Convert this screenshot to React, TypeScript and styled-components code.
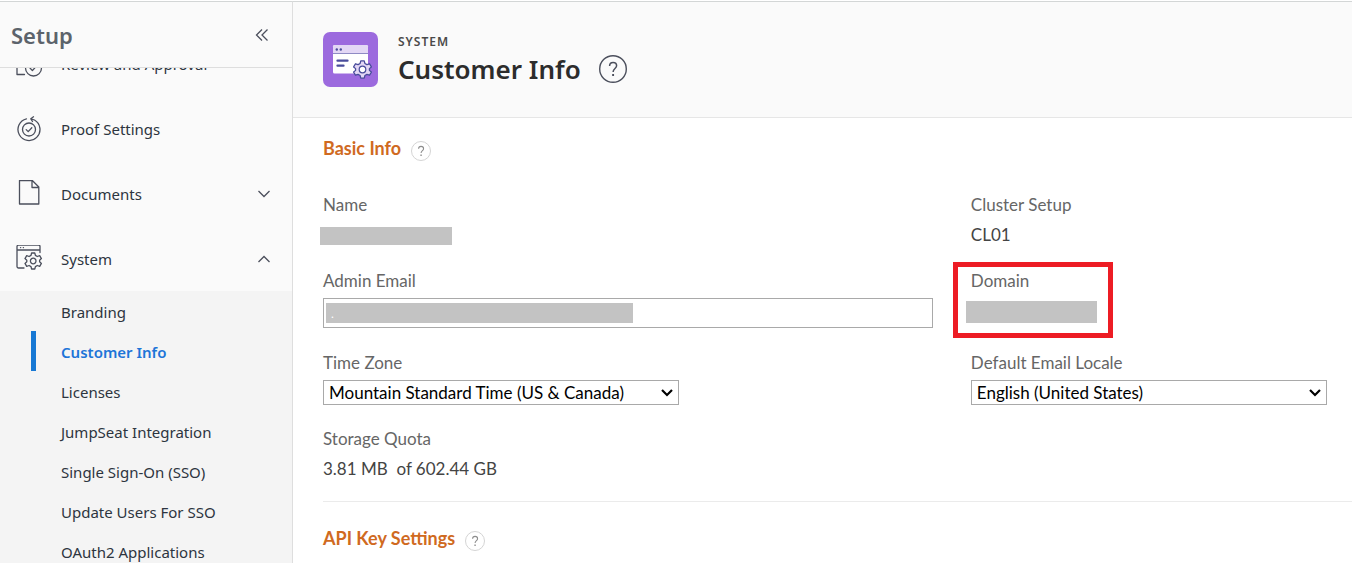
import React from "react";
import styled, { createGlobalStyle, css } from "styled-components";

const navFont = '"Noto Sans", "Open Sans", sans-serif';
const bodyFont = 'Lato, "Open Sans", sans-serif';

const GlobalStyle = createGlobalStyle`
  * { box-sizing: border-box; }
  body { margin: 0; background: #fff; font-family: ${bodyFont}; font-size: 17px; color: #444; }
  h1, h2, p, ul { margin: 0; padding: 0; }
  ul { list-style: none; }
  button { padding: 0; border: 0; background: none; color: inherit; font: inherit; cursor: pointer; }
`;

const Page = styled.div`
  display: flex;
  height: 100vh;
  padding-top: 1px;
  overflow: hidden;
`;

const Sidebar = styled.aside`
  display: flex;
  flex-direction: column;
  flex: 0 0 293px;
  min-height: 0;
  border-top: 1px solid #d3d6d6;
  border-right: 1px solid #dedede;
  background: #fafafa;
  color: #2d3540;
  font-family: ${navFont};
`;

const SidebarHeader = styled.header`
  display: flex;
  flex: none;
  align-items: center;
  justify-content: space-between;
  height: 66px;
  padding: 0 22px 0 11px;
  border-bottom: 1px solid #dedede;
`;

const SidebarTitle = styled.h2`
  color: #5c636b;
  font-size: 22px;
  line-height: 30px;
  font-weight: 600;
`;

const CollapseButton = styled.button`
  display: flex;
  color: #4b4f5c;
`;

const NavScroll = styled.nav`
  flex: 1;
  min-height: 0;
  overflow: hidden;
`;

const NavList = styled.ul`
  margin-top: -37px;
`;

const NavButton = styled.button`
  display: grid;
  grid-template-columns: 28px 1fr 14px;
  column-gap: 17px;
  align-items: center;
  width: 100%;
  height: 65px;
  padding: 0 21px 0 16px;
  font-size: 15px;
  text-align: left;
`;

const SubList = styled.ul`
  background: #f4f4f4;
`;

const SubLink = styled.a<{ $active?: boolean }>`
  display: flex;
  align-items: center;
  height: 40px;
  margin-left: 31px;
  padding: 2px 0 0 25px;
  border-left: 5px solid transparent;
  color: #2d3540;
  font-size: 15px;
  text-decoration: none;
  ${({ $active }) =>
    $active &&
    css`
      border-left-color: #1778d4;
      color: #1d75d8;
      font-weight: 600;
    `}
`;

const Main = styled.main`
  flex: 1;
  min-width: 0;
  border-top: 1px solid #d3d6d6;
`;

const PageHeader = styled.header`
  display: flex;
  align-items: center;
  height: 116px;
  padding-left: 30px;
  border-bottom: 1px solid #e6e6e6;
  background: #fafafa;
  font-family: ${navFont};
`;

const HeaderText = styled.div`
  margin-left: 20px;
`;

const Eyebrow = styled.p`
  color: #4a4a4a;
  font-size: 12px;
  line-height: 18px;
  font-weight: 600;
  letter-spacing: 1px;
`;

const TitleRow = styled.div`
  display: flex;
  align-items: center;
  gap: 18px;
`;

const Title = styled.h1`
  color: #2c2c2c;
  font-size: 26px;
  line-height: 36px;
  font-weight: 600;
`;

const HelpButton = styled.button<{ $large?: boolean }>`
  display: flex;
  color: ${({ $large }) => ($large ? "#4b4f5c" : "#8c8c8c")};
`;

const Section = styled.section`
  margin-left: 30px;
  padding: 18px 0 20px;

  & + & {
    padding-top: 24px;
    border-top: 1px solid #ebebeb;
  }
`;

const SectionHeader = styled.div`
  display: flex;
  align-items: flex-start;
  gap: 10px;
  height: 24px;

  button { margin-top: 5px; }
`;

const SectionTitle = styled.h2`
  color: #d06a1f;
  font-size: 18px;
  line-height: 24px;
  font-weight: 700;
`;

const Fields = styled.div`
  display: grid;
  grid-template-columns: 1.6fr 1fr;
  column-gap: 38px;
  row-gap: 22px;
  margin-top: 33px;
`;

const Field = styled.div`
  position: relative;
  display: flex;
  flex-direction: column;
  gap: 5px;
`;

const Label = styled.label`
  color: #666;
  line-height: 24px;
`;

const Value = styled.p`
  line-height: 25px;
  white-space: pre;
`;

const Redacted = styled.div<{ $tall?: boolean }>`
  width: ${({ $tall }) => ($tall ? 131 : 132)}px;
  height: ${({ $tall }) => ($tall ? 22 : 18)}px;
  margin: ${({ $tall }) => ($tall ? "3px 0 0 -5px" : "5px 0 2px -3px")};
  background: #c3c3c3;
`;

const EmailInput = styled.input`
  width: 100%;
  height: 30px;
  margin-bottom: 1px;
  padding: 0 7px;
  border: 1px solid #a9a9a9;
  background: linear-gradient(#c3c3c3, #c3c3c3) 2px 4px / 307px 20px no-repeat #fff;
  color: #fff;
  font: 12px ${bodyFont};
`;

const SelectBox = styled.div`
  position: relative;
  width: 356px;
  max-width: 100%;
  height: 25px;

  svg {
    position: absolute;
    top: 8px;
    right: 5px;
    pointer-events: none;
  }
`;

const Select = styled.select`
  display: block;
  width: 100%;
  height: 25px;
  padding: 0 24px 0 5px;
  appearance: none;
  border: 1px solid #a9a9a9;
  border-radius: 0;
  background: #fff;
  color: #000;
  font: 17px ${bodyFont};
`;

const Highlight = styled.div`
  position: absolute;
  top: -7px;
  left: -18px;
  width: 160px;
  height: 76px;
  border: 5px solid #ed1c24;
  pointer-events: none;
`;

const gearPath =
  "M-1.6-8h3.2l.6 2.4 1.9 1.1 2.4-.8 1.7 2.9-1.8 1.6v1.6l1.8 1.6-1.7 2.9-2.4-.8-1.9 1.1L1.6 8h-3.2l-.6-2.4-1.9-1.1-2.4.8-1.7-2.9L-6.4.8V-.8l-1.8-1.6 1.7-2.9 2.4.8 1.9-1.1Z";

const iconProps = {
  width: 28,
  height: 28,
  viewBox: "0 0 28 28",
  fill: "none",
  stroke: "#4b4f5c",
  strokeWidth: 1.3,
  strokeLinecap: "round" as const,
  strokeLinejoin: "round" as const,
  "aria-hidden": true,
};

const ReviewIcon = () => (
  <svg {...iconProps}>
    <path d="M8.5 24.5H1V4H20v5" />
    <circle cx="17.500" cy="18" r="8" />
    <path d="m14 18 2.400 2.600 4.400-5" />
  </svg>
);

const ProofIcon = () => (
  <svg {...iconProps}>
    <path d="M10.500 3.800A11 11 0 1 0 18.500 5L14.800 3.800M17.500 1.800l-2.700 2L16.500 6.500" />
    <circle cx="13" cy="14.500" r="6.500" />
    <path d="m10.200 14.600 2 2 3.600-3.800" />
  </svg>
);

const DocumentIcon = () => (
  <svg {...iconProps} viewBox="0 1 28 28">
    <path d="M3.500 1.500h12.800L22.800 8v17H3.500ZM16 1.500V8.500h6.800" />
  </svg>
);

const SystemIcon = () => (
  <svg {...iconProps} viewBox="0 1 28 28">
    <path d="M8 24H2.500A1.500 1.500 0 0 1 1 22.500V2.500A1.500 1.500 0 0 1 2.500 1h20A1.500 1.500 0 0 1 24 2.500V8.500M1 6h23" />
    <path d="M4.500 3.600h.2M7.300 3.600h.2" />
    <g transform="translate(17.200 17)">
      <path d={gearPath} />
      <circle r="2.800" />
    </g>
  </svg>
);

const Chevron = ({ up }: { up?: boolean }) => (
  <svg width="14" height="14" viewBox="0 0 14 14" fill="none" stroke="#4b4f5c" strokeWidth="1.300" aria-hidden>
    <path d={up ? "M1.500 10 7 4.500 12.500 10" : "M1.500 4 7 9.500 12.500 4"} />
  </svg>
);

const SelectArrow = () => (
  <svg width="14" height="10" viewBox="0 0 14 10" fill="none" stroke="#000" strokeWidth="2.200" aria-hidden>
    <path d="M2 2 7 7l5-5" />
  </svg>
);

const HelpMark = ({ size }: { size: number }) => (
  <svg width={size} height={size} viewBox="0 0 28 28" fill="none" stroke="currentColor" aria-hidden>
    <circle cx="14" cy="14" r="13.300" strokeWidth="1.400" stroke={size < 28 ? "#d4d4d4" : "currentColor"} />
    <path d="M10.600 11c0-2.200 1.500-3.500 3.500-3.500s3.500 1.200 3.500 3.200c0 2.600-3.500 3-3.500 6.200" strokeWidth="1.500" />
    <path d="M14.100 19v2" strokeWidth="1.900" />
  </svg>
);

const CustomerInfoIcon = () => (
  <svg width="55" height="55" viewBox="0 0 55 55" aria-hidden>
    <rect width="55" height="55" rx="7" fill="#9c6ade" />
    <rect x="10" y="13" width="35" height="28.500" rx="1.500" fill="#fff" />
    <path d="M10 21v-6.500a1.500 1.500 0 0 1 1.500-1.500h32a1.500 1.500 0 0 1 1.500 1.500V21Z" fill="#e3d7f5" />
    <path d="M10 21.500h35" stroke="#8f8bc4" strokeWidth="1" />
    <circle cx="13.800" cy="17.500" r="1.200" fill="#494c9b" />
    <circle cx="17.800" cy="17.500" r="1.200" fill="#494c9b" />
    <path d="M14.500 28.700h10M14.500 33.700h6" stroke="#494c9b" strokeWidth="2.300" strokeLinecap="round" />
    <g transform="translate(39.500 37.500)" fill="#e3d7f5" stroke="#494c9b" strokeWidth="1.200" strokeLinejoin="round">
      <path d={gearPath} transform="scale(1.080)" />
      <circle r="3.300" fill="#fff" />
    </g>
  </svg>
);

const navItems = [
  { label: "Review and Approval", icon: <ReviewIcon /> },
  { label: "Proof Settings", icon: <ProofIcon /> },
  { label: "Documents", icon: <DocumentIcon />, chevron: <Chevron /> },
  { label: "System", icon: <SystemIcon />, chevron: <Chevron up /> },
];

const systemPages = [
  "Branding",
  "Customer Info",
  "Licenses",
  "JumpSeat Integration",
  "Single Sign-On (SSO)",
  "Update Users For SSO",
  "OAuth2 Applications",
];

export default function App() {
  return (
    <>
      <GlobalStyle />
      <Page>
        <Sidebar>
          <SidebarHeader>
            <SidebarTitle>Setup</SidebarTitle>
            <CollapseButton aria-label="Collapse sidebar">
              <svg width="16" height="16" viewBox="0 0 16 16" fill="none" stroke="currentColor" strokeWidth="1.300" aria-hidden>
                <path d="M8 2.500 2.500 8 8 13.500M13.500 2.500 8 8l5.500 5.500" />
              </svg>
            </CollapseButton>
          </SidebarHeader>
          <NavScroll aria-label="Setup">
            <NavList>
              {navItems.map(({ label, icon, chevron }) => (
                <li key={label}>
                  <NavButton>
                    {icon}
                    <span>{label}</span>
                    {chevron}
                  </NavButton>
                </li>
              ))}
            </NavList>
            <SubList>
              {systemPages.map((page) => (
                <li key={page}>
                  <SubLink href="#" $active={page === "Customer Info"}>
                    {page}
                  </SubLink>
                </li>
              ))}
            </SubList>
          </NavScroll>
        </Sidebar>
        <Main>
          <PageHeader>
            <CustomerInfoIcon />
            <HeaderText>
              <Eyebrow>SYSTEM</Eyebrow>
              <TitleRow>
                <Title>Customer Info</Title>
                <HelpButton $large aria-label="Help">
                  <HelpMark size={28} />
                </HelpButton>
              </TitleRow>
            </HeaderText>
          </PageHeader>
          <Section>
            <SectionHeader>
              <SectionTitle>Basic Info</SectionTitle>
              <HelpButton aria-label="Basic Info help">
                <HelpMark size={20} />
              </HelpButton>
            </SectionHeader>
            <Fields>
              <Field>
                <Label as="span">Name</Label>
                <Redacted />
              </Field>
              <Field>
                <Label as="span">Cluster Setup</Label>
                <Value>CL01</Value>
              </Field>
              <Field>
                <Label htmlFor="email">Admin Email</Label>
                <EmailInput id="email" defaultValue="." />
              </Field>
              <Field>
                <Label as="span">Domain</Label>
                <Redacted $tall />
                <Highlight />
              </Field>
              <Field>
                <Label htmlFor="zone">Time Zone</Label>
                <SelectBox>
                  <Select id="zone">
                    <option>Mountain Standard Time (US &amp; Canada)</option>
                  </Select>
                  <SelectArrow />
                </SelectBox>
              </Field>
              <Field>
                <Label htmlFor="locale">Default Email Locale</Label>
                <SelectBox>
                  <Select id="locale">
                    <option>English (United States)</option>
                  </Select>
                  <SelectArrow />
                </SelectBox>
              </Field>
              <Field>
                <Label as="span">Storage Quota</Label>
                <Value>{"3.81 MB  of 602.44 GB"}</Value>
              </Field>
            </Fields>
          </Section>
          <Section>
            <SectionHeader>
              <SectionTitle>API Key Settings</SectionTitle>
              <HelpButton aria-label="API Key Settings help">
                <HelpMark size={20} />
              </HelpButton>
            </SectionHeader>
          </Section>
        </Main>
      </Page>
    </>
  );
}
